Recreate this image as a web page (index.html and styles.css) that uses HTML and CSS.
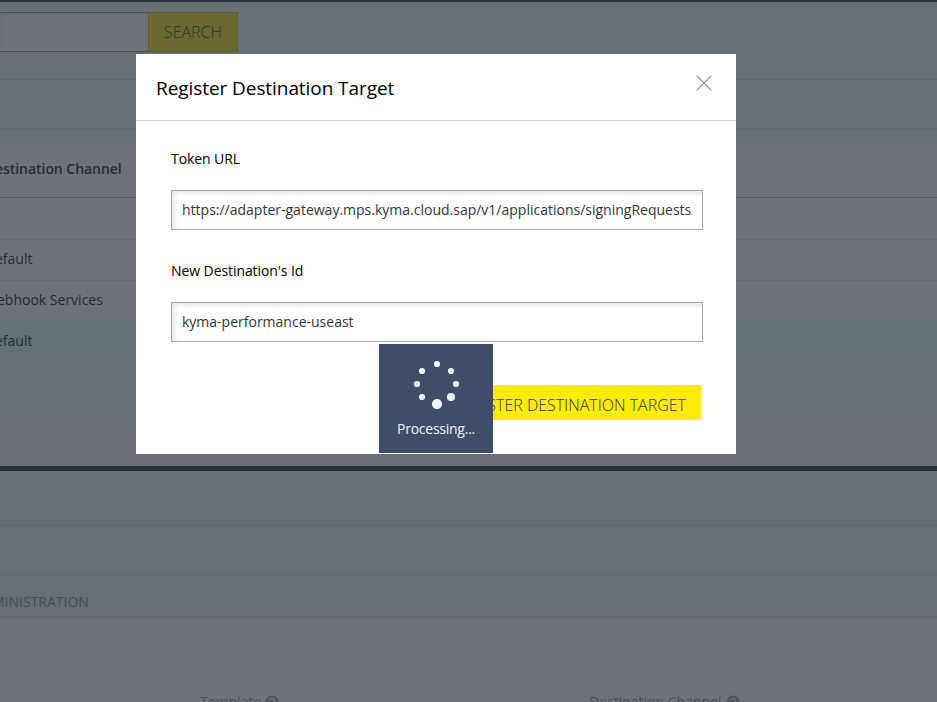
FILE: index.html
```html
<!DOCTYPE html>
<html lang="en">
<head>
<meta charset="utf-8">
<title>Register Destination Target</title>
<link rel="stylesheet" href="styles.css">
</head>
<body>
<main class="page">
  <div class="search-row">
    <div class="search-input"></div>
    <div class="search-button">SEARCH</div>
  </div>
  <div class="toolbar"></div>
  <div class="spacer"></div>
  <div class="row head"><span class="head-text">estination Channel</span></div>
  <div class="row filter"></div>
  <div class="row"><span>efault</span></div>
  <div class="row"><span class="webhook">ebhook Services</span></div>
  <div class="row selected"><span>efault</span></div>
  <div class="table-end"></div>
  <div class="footer"></div>
  <div class="divider"></div>
  <div class="panel-title"></div>
  <div class="toolbar"></div>
  <div class="tabs"><span>MINISTRATION</span></div>
  <div class="fields">
    <div class="field">Template
      <svg class="help" viewBox="0 0 14 14"><circle cx="7" cy="7" r="6.5"/><path d="M4.8 5.6C4.8 2.8 9.4 2.8 9.4 5.4C9.4 6.8 7.2 7 7.2 8.5M7.2 10v1.4"/></svg>
    </div>
    <div class="field">Destination Channel
      <svg class="help" viewBox="0 0 14 14"><circle cx="7" cy="7" r="6.5"/><path d="M4.8 5.6C4.8 2.8 9.4 2.8 9.4 5.4C9.4 6.8 7.2 7 7.2 8.5M7.2 10v1.4"/></svg>
    </div>
  </div>
</main>

<section class="dialog">
  <header class="dialog-head">
    <h1>Register Destination Target</h1>
    <svg class="close" viewBox="0 0 16 16"><path d="M.6 .6L15.4 15.4M15.4 .6L.6 15.4"/></svg>
  </header>
  <div class="dialog-body">
    <div class="label">Token URL</div>
    <div class="input"><span>https://adapter-gateway.mps.kyma.cloud.sap/v1/applications/signingRequests/info</span></div>
    <div class="label second">New Destination's Id</div>
    <div class="input"><span>kyma-performance-useast</span></div>
    <div class="actions"><div class="submit">REGISTER DESTINATION TARGET</div></div>
  </div>
  <div class="processing">
    <svg class="spinner" viewBox="0 0 48 50">
      <circle cx="24" cy="5" r="3.1"/><circle cx="38" cy="12" r="3.1"/><circle cx="43" cy="25" r="3.1"/><circle cx="38" cy="38" r="4.1"/>
      <circle cx="24" cy="45" r="5.1"/><circle cx="9" cy="38" r="3.1"/><circle cx="4" cy="25" r="3.1"/><circle cx="9" cy="12" r="3.1"/>
    </svg>
    <div class="processing-text">Processing...</div>
  </div>
</section>
</body>
</html>
```
FILE: styles.css
```css
* { box-sizing: border-box; }
html, body { height: 100%; }
body {
  margin: 0;
  overflow: hidden;
  font: 14px/20px "Open Sans", "Noto Sans", sans-serif;
  color: #242e37;
  background: #6f727a;
}
.page {
  height: 702px;
  overflow: hidden;
  display: flex;
  flex-direction: column;
  border-top: 2px solid #2a3642;
}
.page > * { flex: none; }
.search-row {
  height: 78px;
  padding-top: 10px;
  display: flex;
  align-items: flex-start;
  background: #676e74;
  border-bottom: 1px solid #5f686f;
}
.search-input {
  width: 148px;
  height: 40px;
  background: #6f727a;
  border: solid #4d515a;
  border-width: 1px 0;
  box-shadow: inset 0 2px 3px #686b73;
}
.search-button {
  width: 90px;
  height: 40px;
  border: 1px solid #5c5d3b;
  background: #6c692f;
  color: #25343b;
  font-size: 16px;
  font-weight: 300;
  line-height: 38px;
  text-align: center;
}
.toolbar { height: 49px; background: #676e74; border-bottom: 1px solid #5f686f; }
.spacer { height: 15px; background: #666e74; }
.row {
  height: 41px;
  display: flex;
  align-items: center;
  border-bottom: 1px solid #646c75;
}
.row span { margin-left: -5px; padding-bottom: 2px; }
.row .webhook { margin-left: -3px; }
.head { height: 54px; border-color: #575d65; font-weight: 600; }
.head .head-text { margin-left: -5px; padding-bottom: 3px; letter-spacing: -.05px; }
.filter { height: 42px; }
.selected { height: 40px; border: 0; background: #637074; }
.row.selected span { padding-bottom: 3px; }
.table-end { height: 64px; background: #666d74; }
.footer { height: 40px; background: #6b6e75; }
.divider { height: 5px; background: #222f3d; }
.panel-title { height: 55px; background: #666e74; border-bottom: 1px solid #5f686f; }
.tabs { height: 44px; padding-top: 17px; background: #666e74; color: #424d5e; }
.tabs span { margin-left: -8px; }
.fields { display: grid; grid-template-columns: 389px 1fr; padding: 73px 0 0 200px; }
.field { display: flex; align-items: center; gap: 4px; color: #484f5a; white-space: nowrap; }
.help { width: 14px; height: 14px; margin-bottom: 1px; fill: #495463; }
.help path { fill: none; stroke: #6f727a; stroke-width: 1.7; }

.dialog {
  position: absolute;
  left: 136px;
  top: 54px;
  width: 600px;
  height: 400px;
  background: #fff;
  color: #000;
}
.dialog-head {
  height: 67px;
  padding: 0 24px 0 20px;
  display: flex;
  align-items: center;
  justify-content: space-between;
  border-bottom: 1px solid #d2d5da;
}
.dialog-head h1 { margin: 0; padding-top: 1px; font-size: 19px; font-weight: 400; line-height: 26px; letter-spacing: -.07px; }
.close { width: 16px; height: 16px; margin-bottom: 9px; fill: none; stroke: #7e8ca1; stroke-width: 1.2; }
.dialog-body { padding: 28px 33px 0 35px; }
.label { height: 41px; letter-spacing: -.08px; }
.second { margin-top: 31px; }
.input {
  height: 40px;
  padding: 9px 10px;
  border: 1px solid #a8a9aa;
  box-shadow: inset 2px 2px 5px #e2e2e2;
  color: #32363a;
}
.input span { display: block; overflow: hidden; white-space: nowrap; }
.actions { display: flex; justify-content: flex-end; padding: 43px 2px 0 0; }
.submit {
  height: 35px;
  padding: 0 15px;
  background: #ffeb0a;
  color: #32363a;
  font-size: 16px;
  font-weight: 300;
  line-height: 40px;
}
.processing {
  position: absolute;
  left: 243px;
  top: 290px;
  width: 114px;
  height: 109px;
  padding-top: 15px;
  background: #3f4d66;
  color: #f2f4f7;
  text-align: center;
}
.processing-text { letter-spacing: -.25px; }
.spinner { display: block; width: 48px; height: 50px; margin: 0 auto 10px 34px; fill: #f0f2f6; }
```
